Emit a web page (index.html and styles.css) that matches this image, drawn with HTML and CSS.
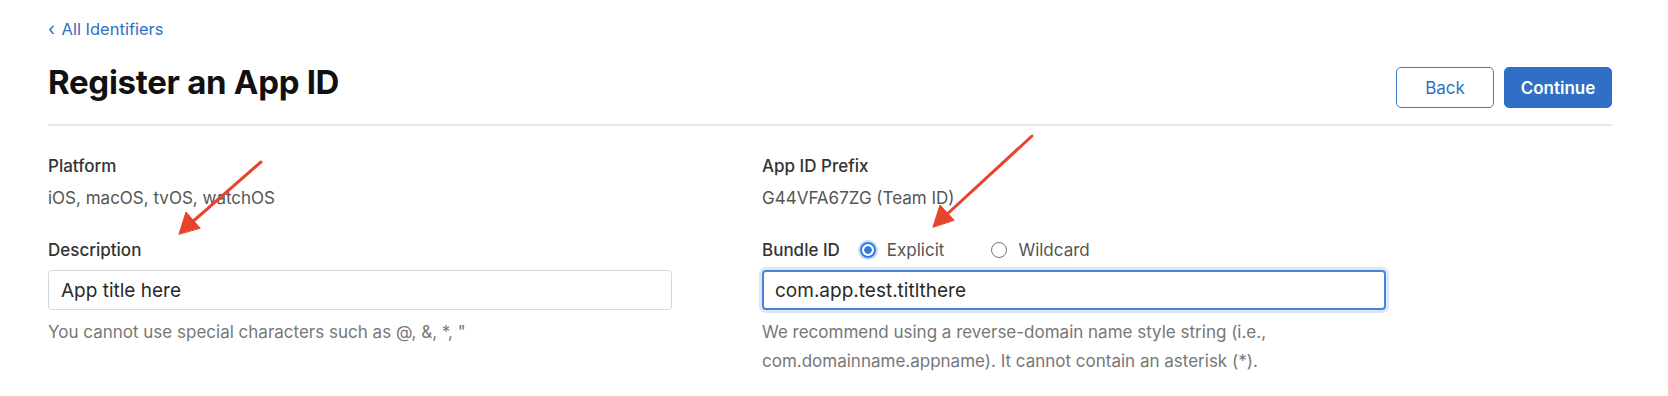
FILE: index.html
```html
<!DOCTYPE html>
<html lang="en">
<head>
<meta charset="utf-8">
<title>Register an App ID</title>
<link rel="stylesheet" href="styles.css">
</head>
<body>
<div class="page">
  <a class="crumb" href="#"><span class="chev">‹</span> All Identifiers</a>
  <header class="head">
    <h1 class="title">Register an App ID</h1>
    <div class="actions">
      <button class="btn btn-outline">Back</button>
      <button class="btn btn-primary">Continue</button>
    </div>
  </header>
  <div class="grid">
    <section class="col">
      <div class="field">
        <div class="label">Platform</div>
        <div class="value">iOS, macOS, tvOS, watchOS</div>
      </div>
      <div class="field field-input">
        <div class="label">Description</div>
        <div class="input">App title here</div>
        <p class="help">You cannot use special characters such as @, &amp;, *, "</p>
      </div>
    </section>
    <section class="col">
      <div class="field">
        <div class="label">App ID Prefix</div>
        <div class="value">G44VFA67ZG (Team ID)</div>
      </div>
      <div class="field field-input">
        <div class="label-row">
          <span class="label">Bundle ID</span>
          <label class="radio"><span class="dot checked"></span>Explicit</label>
          <label class="radio"><span class="dot"></span>Wildcard</label>
        </div>
        <div class="input input-focus">com.app.test.titlthere</div>
        <p class="help">We recommend using a reverse-domain name style string (i.e.,<br>com.domainname.appname). It cannot contain an asterisk (*).</p>
      </div>
    </section>
  </div>
  <svg class="arrows" width="1668" height="396" viewBox="0 0 1668 396">
    <g stroke="#e8432d" stroke-width="3" stroke-linecap="round" fill="#e8432d">
      <line x1="261" y1="162" x2="190" y2="224"/>
      <polygon points="179,234 186,212 200,228" stroke-width="1"/>
      <line x1="1032" y1="136" x2="944" y2="217"/>
      <polygon points="933,227 940,205 954,220" stroke-width="1"/>
    </g>
  </svg>
</div>
</body>
</html>
```

FILE: styles.css
```css
html, body {
  margin: 0;
  padding: 0;
  background: #ffffff;
}
body {
  font-family: Inter, "Liberation Sans", Arial, sans-serif;
  color: #1d1d1f;
  width: 1668px;
  height: 396px;
  overflow: hidden;
}
.page {
  position: relative;
  padding: 18px 56px 0 48px;
}
.crumb {
  display: inline-block;
  color: #2f6fc6;
  text-decoration: none;
  font-size: 16.5px;
  line-height: 22px;
}
.chev {
  font-size: 18px;
  margin-right: 2px;
}
.head {
  display: flex;
  align-items: flex-start;
  justify-content: space-between;
  margin-top: 20px;
  padding-bottom: 16px;
  border-bottom: 2px solid #e6e6e6;
}
.title {
  margin: 0;
  font-size: 33px;
  line-height: 44px;
  font-weight: 700;
  color: #111;
  letter-spacing: -0.3px;
}
.actions {
  display: flex;
  gap: 10px;
  margin-top: 7px;
}
.btn {
  font-family: inherit;
  font-size: 17px;
  height: 41px;
  border-radius: 5px;
  cursor: pointer;
}
.btn-outline {
  width: 98px;
  background: #fff;
  color: #2f6fc6;
  border: 1px solid #3a78cc;
}
.btn-primary {
  width: 108px;
  background: #2f6fc6;
  color: #fff;
  border: 1px solid #2f6fc6;
  font-weight: 600;
}
.grid {
  display: grid;
  grid-template-columns: 714px 714px;
  padding-top: 29px;
}
.field {
  display: flex;
  flex-direction: column;
}
.field-input {
  margin-top: 30px;
}
.label {
  font-size: 17px;
  line-height: 22px;
  font-weight: 500;
  color: #333;
}
.value {
  margin-top: 10px;
  font-size: 17px;
  line-height: 22px;
  color: #555;
}
.label-row {
  display: flex;
  align-items: center;
  height: 22px;
}
.radio {
  display: flex;
  align-items: center;
  font-size: 17px;
  color: #555;
  margin-left: 20px;
}
.radio + .radio {
  margin-left: 47px;
}
.dot {
  width: 16px;
  height: 16px;
  border-radius: 50%;
  border: 1px solid #777;
  box-sizing: border-box;
  margin-right: 11px;
  background: #fff;
}
.dot.checked {
  border: 2px solid #2f78e8;
  background: radial-gradient(circle, #2f78e8 0 3.5px, #fff 4px);
  box-shadow: 0 0 0 2px #c9dcf6;
}
.input {
  margin-top: 9px;
  width: 624px;
  height: 40px;
  box-sizing: border-box;
  border: 1px solid #d8d8d8;
  border-radius: 4px;
  padding: 0 12px;
  display: flex;
  align-items: center;
  font-size: 19px;
  color: #2a2a2a;
}
.input-focus {
  border: 2px solid #4a83d6;
  box-shadow: 0 0 0 3px #dbe7f8;
  padding-left: 11px;
}
.help {
  margin: 8px 0 0;
  font-size: 17px;
  line-height: 29px;
  color: #777;
}
.arrows {
  position: absolute;
  left: 0;
  top: 0;
  pointer-events: none;
}
```
